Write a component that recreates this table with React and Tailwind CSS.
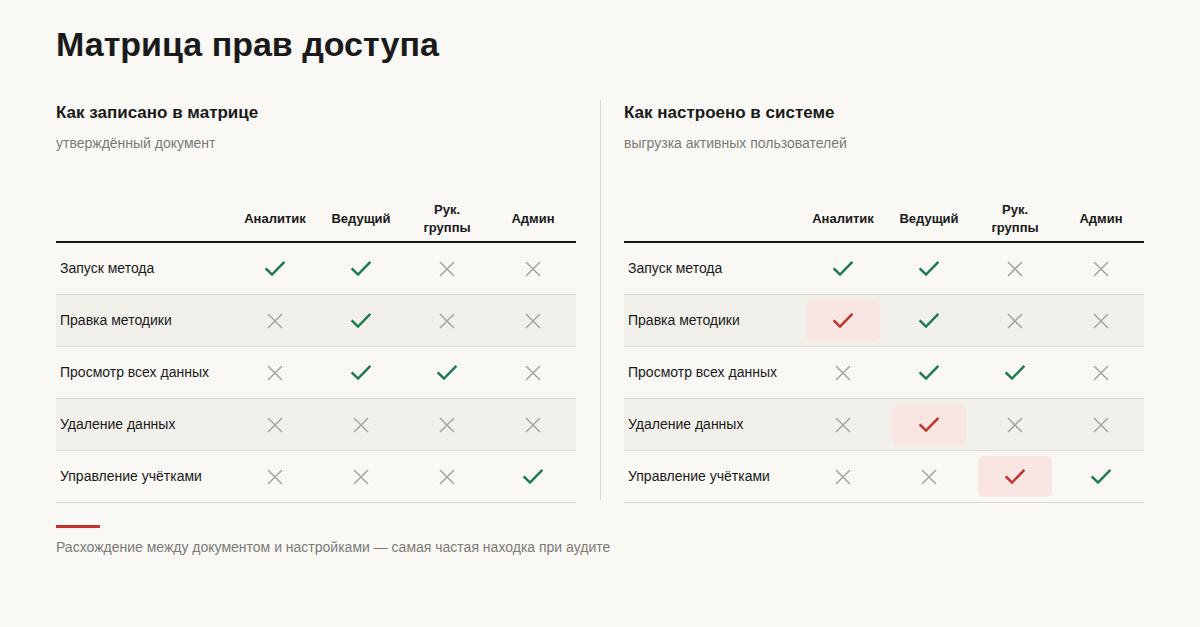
import React from "react";

const roles = ["Аналитик", "Ведущий", "Рук.\nгруппы", "Админ"];
const rows = [
  "Запуск метода",
  "Правка методики",
  "Просмотр всех данных",
  "Удаление данных",
  "Управление учётками",
];
// 1 = yes, 0 = no, 2 = yes mismatch
const docData = [
  [1, 1, 0, 0],
  [0, 1, 0, 0],
  [0, 1, 1, 0],
  [0, 0, 0, 0],
  [0, 0, 0, 1],
];
const sysData = [
  [1, 1, 0, 0],
  [2, 1, 0, 0],
  [0, 1, 1, 0],
  [0, 2, 0, 0],
  [0, 0, 2, 1],
];

function Check({ red }) {
  return (
    <svg width="20" height="16" viewBox="0 0 20 16" fill="none">
      <path
        d="M1.5 8.2 L7 13.5 L18.5 1.8"
        stroke={red ? "#c0322a" : "#1c7a4c"}
        strokeWidth="2.4"
        strokeLinecap="square"
        strokeLinejoin="miter"
      />
    </svg>
  );
}

function Cross() {
  return (
    <svg width="16" height="16" viewBox="0 0 16 16" fill="none">
      <path d="M1 1 L15 15 M15 1 L1 15" stroke="#aaa7a2" strokeWidth="1.6" />
    </svg>
  );
}

function Table({ data }) {
  return (
    <div className="mt-[44px]">
      <div className="grid grid-cols-[176px_repeat(4,86px)] h-[46px] items-center border-b-2 border-[#1a1a1a]">
        <div />
        {roles.map((r) => (
          <div
            key={r}
            className="text-center text-[13px] leading-[18px] font-bold text-[#1a1a1a] whitespace-pre-line"
          >
            {r}
          </div>
        ))}
      </div>
      {rows.map((label, i) => (
        <div
          key={label}
          className={
            "grid grid-cols-[176px_repeat(4,86px)] h-[52px] items-center border-b border-[#dedbd6] " +
            (i % 2 === 1 ? "bg-[#f2f0eb]" : "")
          }
        >
          <div className="pl-1 text-[14px] text-[#1a1a1a]">{label}</div>
          {data[i].map((v, j) => (
            <div key={j} className="h-full flex items-center justify-center px-[6px] py-[5px]">
              <div
                className={
                  "w-full h-full flex items-center justify-center rounded-md " +
                  (v === 2 ? "bg-[#f9e5e1]" : "")
                }
              >
                {v === 0 ? <Cross /> : <Check red={v === 2} />}
              </div>
            </div>
          ))}
        </div>
      ))}
    </div>
  );
}

function Panel({ title, sub, data }) {
  return (
    <div className="w-[520px]">
      <h2 className="text-[17px] leading-[26px] font-bold text-[#1a1a1a]">{title}</h2>
      <p className="mt-[7px] text-[14px] leading-[20px] text-[#7d7a75]">{sub}</p>
      <Table data={data} />
    </div>
  );
}

export default function App() {
  return (
    <div
      className="w-[1200px] h-[627px] bg-[#f9f8f5] pl-[56px] pt-[24px] overflow-hidden"
      style={{ fontFamily: '"Liberation Sans", Arial, sans-serif' }}
    >
      <h1 className="text-[34px] leading-[40px] font-bold text-[#1a1a1a]">
        Матрица прав доступа
      </h1>
      <div className="mt-[36px] flex">
        <Panel title="Как записано в матрице" sub="утверждённый документ" data={docData} />
        <div className="ml-[24px] mr-[23px] w-px h-[400px] bg-[#dcd9d4]" />
        <Panel title="Как настроено в системе" sub="выгрузка активных пользователей" data={sysData} />
      </div>
      <div className="mt-[22px] w-[44px] h-[3px] bg-[#c0322a]" />
      <p className="mt-[9px] text-[14px] leading-[20px] text-[#7d7a75]">
        Расхождение между документом и настройками — самая частая находка при аудите
      </p>
    </div>
  );
}
